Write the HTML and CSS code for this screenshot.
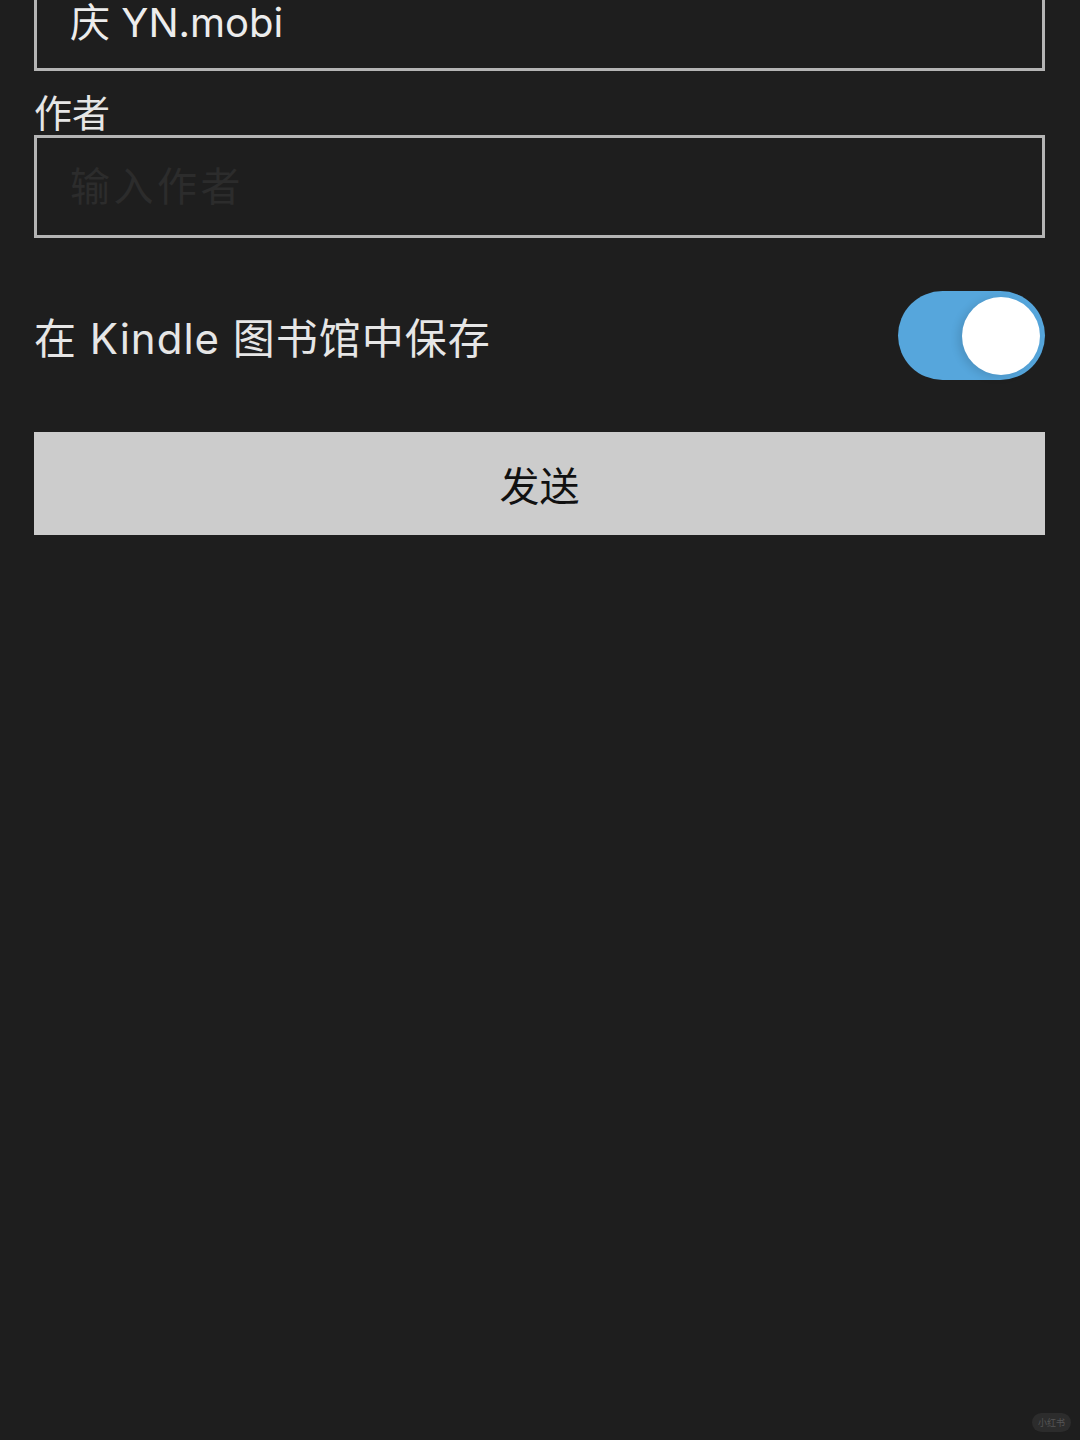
FILE: index.html
```html
<!DOCTYPE html>
<html lang="zh-CN">

<head>
    <meta charset="UTF-8">
    <meta name="viewport" content="width=device-width, initial-scale=1.0">
    <title>发送到 Kindle</title>
    <link rel="stylesheet" href="styles.css">
</head>

<body>

    <form id="sendForm" class="send-form">
        <input type="text" id="title" name="title" class="field first-field" value="庆 YN.mobi">

        <label for="author" class="field-label">作者</label>
        <input type="text" id="author" name="author" class="field" placeholder="输入作者">

        <div class="toggle-row">
            <span class="toggle-text">在 Kindle 图书馆中保存</span>
            <label class="toggle">
                <input type="checkbox" id="saveToLibrary" checked>
                <span class="knob"></span>
            </label>
        </div>

        <button type="button" class="send-button">发送</button>
    </form>

    <div class="watermark">小红书</div>

</body>

</html>
```

FILE: styles.css
```css
* {
    margin: 0;
    box-sizing: border-box;
}

body {
    font-family: Inter, 'Noto Sans CJK SC', sans-serif;
    margin: 0;
    padding: 0;
    min-height: 100vh;
    background-color: #1e1e1e;
    color: #e8e8e8;
}

.send-form {
    display: flex;
    flex-direction: column;
    padding: 0 35px 0 34px;
    margin-top: -32px;
}

.field {
    display: block;
    width: 100%;
    height: 103px;
    padding: 0 33px;
    border: 3px solid #b4b4b4;
    border-radius: 0;
    background-color: #1e1e1e;
    color: #ececec;
    font-family: Inter, 'Noto Sans CJK SC', sans-serif;
    font-size: 40px;
    outline: none;
}

.field::placeholder {
    color: #2c2c2c;
    letter-spacing: 3.5px;
}

.field-label {
    display: block;
    margin-top: 20px;
    font-size: 38px;
    line-height: 44px;
    color: #e6e6e6;
}

.toggle-row {
    display: flex;
    align-items: center;
    justify-content: space-between;
    margin-top: 53px;
}

.toggle-text {
    font-size: 42px;
    letter-spacing: 1px;
    color: #e6e6e6;
}

.toggle {
    display: flex;
    align-items: center;
    justify-content: flex-end;
    width: 147px;
    height: 89px;
    padding: 0 5px;
    border-radius: 45px;
    background-color: #56a6dc;
    cursor: pointer;
}

.toggle input {
    display: none;
}

.knob {
    width: 78px;
    height: 78px;
    border-radius: 50%;
    background-color: #fff;
    box-shadow: -4px 2px 8px rgba(0, 0, 0, 0.12);
}

.send-button {
    margin-top: 52px;
    height: 103px;
    width: 100%;
    border: none;
    border-radius: 0;
    background-color: #cccccc;
    color: #111;
    font-family: Inter, 'Noto Sans CJK SC', sans-serif;
    font-size: 40px;
    cursor: pointer;
}

.watermark {
    position: absolute;
    right: 9px;
    top: 1413px;
    padding: 3px 6px;
    border-radius: 10px;
    background-color: #2c2c2c;
    color: #555;
    font-family: 'Noto Sans CJK SC', sans-serif;
    font-size: 9px;
    line-height: 13px;
}
```
